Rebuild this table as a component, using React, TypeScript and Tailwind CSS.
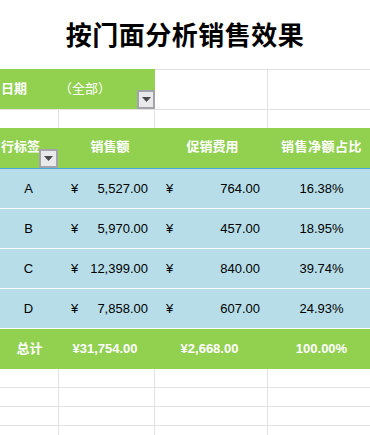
import React from "react";

const font = { fontFamily: '"Liberation Sans", "Noto Sans CJK SC", sans-serif' };

const rows = [
  { label: "A", sales: "5,527.00", promo: "764.00", pct: "16.38%" },
  { label: "B", sales: "5,970.00", promo: "457.00", pct: "18.95%" },
  { label: "C", sales: "12,399.00", promo: "840.00", pct: "39.74%" },
  { label: "D", sales: "7,858.00", promo: "607.00", pct: "24.93%" },
];

const cols = "grid grid-cols-[59px_96px_113px_107px]";

function DropButton({ className }: { className: string }) {
  return (
    <div
      className={`absolute flex items-center justify-center border-2 border-[#a3a3ab] bg-[#e9e9ec] ${className}`}
    >
      <svg width="9" height="5" viewBox="0 0 9 5">
        <path d="M0 0h9L4.5 5z" fill="#4a4a4a" />
      </svg>
    </div>
  );
}

export default function App() {
  return (
    <div
      className="w-[370px] h-[435px] overflow-hidden bg-white text-[13px] text-black"
      style={font}
    >
      <div className="h-[69px] flex items-center justify-center pb-[2px]">
        <h1
          className="text-[26px] font-bold tracking-[0.5px]"
          style={{ fontFamily: '"Noto Sans CJK SC", sans-serif' }}
        >
          按门面分析销售效果
        </h1>
      </div>

      {/* filter row */}
      <div className={`${cols} h-[40px]`}>
        <div className="bg-[#92d050] text-white font-bold flex items-center pl-[1px]">日期</div>
        <div className="bg-[#92d050] text-white flex items-center relative">
          （全部）
          <DropButton className="w-[18px] h-[19px] right-0 bottom-0" />
        </div>
        <div className="border-t border-r border-[#e2e2e2]" />
        <div className="border-t border-[#e2e2e2]" />
      </div>

      {/* empty row */}
      <div className={`${cols} h-[19px] border-t border-[#e2e2e2]`}>
        <div className="border-r border-[#e2e2e2]" />
        <div className="border-r border-[#e2e2e2]" />
        <div className="border-r border-[#e2e2e2]" />
        <div />
      </div>

      {/* header */}
      <div
        className={`${cols} h-[41px] bg-[#92d050] border-b border-[#4ba7d6] text-white font-bold`}
      >
        <div className="relative flex items-center pl-[1px] pb-[2px]">
          行标签
          <DropButton className="w-[19px] h-[19px] right-[1px] bottom-0" />
        </div>
        <div className="flex items-center justify-center pl-[6px] pb-[2px]">销售额</div>
        <div className="flex items-center justify-center pl-[2px] pb-[2px]">促销费用</div>
        <div className="flex items-center justify-center pb-[2px] tracking-[0.5px]">销售净额占比</div>
      </div>

      {/* data */}
      {rows.map((r) => (
        <div
          key={r.label}
          className={`${cols} h-[40px] bg-[#b7dde8] border-b border-white`}
        >
          <div className="flex items-center justify-center pr-[2px]">{r.label}</div>
          <div className="flex items-center justify-between pl-[12px] pr-[7px]">
            <span>¥</span>
            <span>{r.sales}</span>
          </div>
          <div className="flex items-center justify-between pl-[11px] pr-[8px]">
            <span>¥</span>
            <span>{r.promo}</span>
          </div>
          <div className="flex items-center justify-center">{r.pct}</div>
        </div>
      ))}

      {/* total */}
      <div className={`${cols} h-[40px] bg-[#92d050] text-white font-bold`}>
        <div className="flex items-center justify-center">总计</div>
        <div className="flex items-center justify-center pr-[4px]">¥31,754.00</div>
        <div className="flex items-center justify-center pr-[4px]">¥2,668.00</div>
        <div className="flex items-center justify-center">100.00%</div>
      </div>

      {/* empty grid */}
      {[0, 1, 2, 3].map((i) => (
        <div key={i} className={`${cols} h-[19px] border-b border-[#e2e2e2]`}>
          <div className="border-r border-[#e2e2e2]" />
          <div className="border-r border-[#e2e2e2]" />
          <div className="border-r border-[#e2e2e2]" />
          <div />
        </div>
      ))}
    </div>
  );
}
